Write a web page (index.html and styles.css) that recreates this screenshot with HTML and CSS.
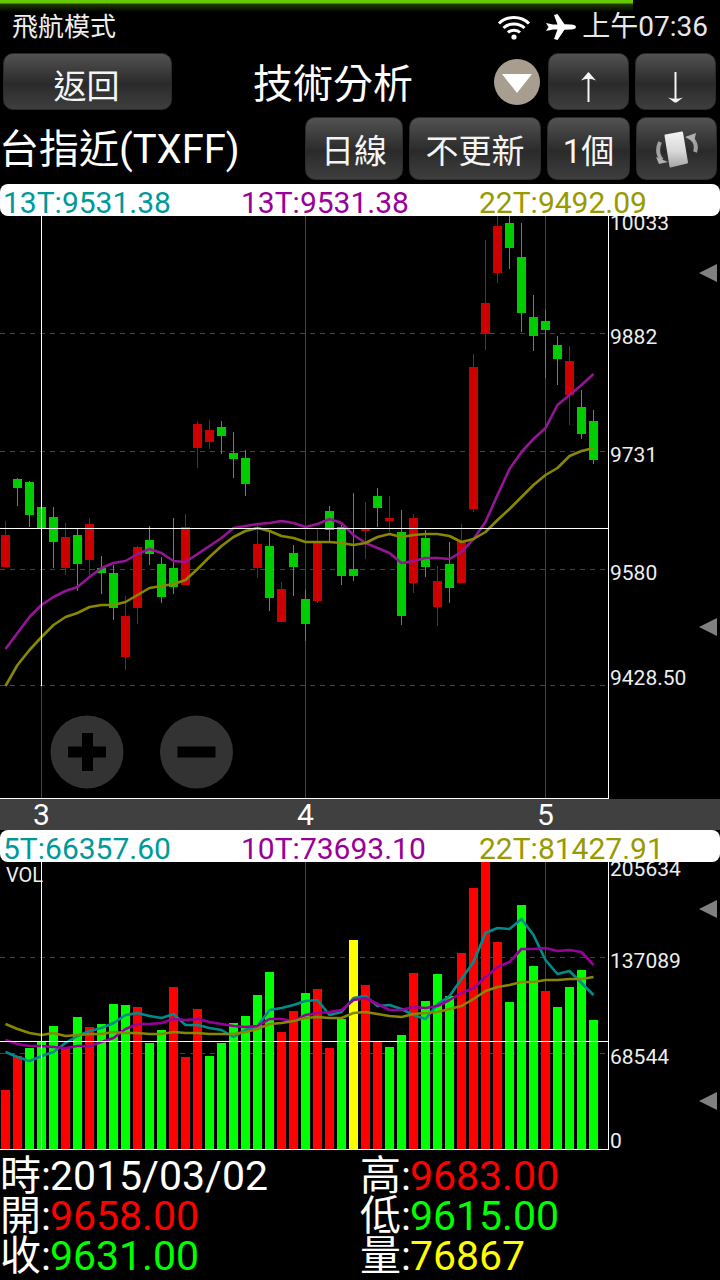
FILE: index.html
```html
<!DOCTYPE html>
<html lang="zh-Hant">
<head>
<meta charset="utf-8">
<title>技術分析</title>
<link rel="stylesheet" href="styles.css">
</head>
<body>
<div class="page">
  <div class="progress"></div>
  <header class="status">
    <span class="status-left">飛航模式</span>
    <div class="status-right">
      <svg class="wifi" width="34" height="26" viewBox="0 0 34 26"><path d="M2 9.500C10 1.500 24 1.500 32 9.500M6.500 14C12 8.500 22 8.500 27.500 14M11 18.500C14 15.500 20 15.500 23 18.500" fill="none" stroke="#fff" stroke-width="3"/><circle cx="17" cy="23" r="2.600" fill="#fff"/></svg>
      <svg class="plane" width="30" height="26" viewBox="0 0 30 26"><path d="M0 9l2.500 4L0 17l7-1.600 4.500 0L8 25l3.500 1 7-10.200 6.500-.3C28 15.300 30 14.500 30 13s-2-2.300-5-2.500l-6.500-.3L11.500 0 8 1l3.500 9.600H7z" fill="#fff"/></svg>
      <span class="clock">上午07:36</span>
    </div>
  </header>

  <div class="toolbar">
    <button class="btn btn-back">返回</button>
    <h1 class="title">技術分析</h1>
    <div class="drop"><i class="drop-arrow"></i></div>
    <button class="btn btn-arrow btn-up" aria-label="上">
      <svg width="79" height="55" viewBox="1 1 79 55"><path d="M40.500 20V49" stroke="#f4f4f4" stroke-width="2" fill="none"/><path d="M33 27.500L40.500 19 48 27.500Q40.500 24 33 27.500z" fill="#f4f4f4"/></svg>
    </button>
    <button class="btn btn-arrow btn-down" aria-label="下">
      <svg width="79" height="55" viewBox="1 1 79 55"><path d="M40.500 19V48" stroke="#f4f4f4" stroke-width="2" fill="none"/><path d="M33 44.500Q40.500 47 48 44.500L41.500 49.500H39.500z" fill="#f4f4f4"/></svg>
    </button>
  </div>

  <div class="toolbar second">
    <div class="stock">台指近(TXFF)</div>
    <button class="btn btn-day">日線</button>
    <button class="btn btn-refresh">不更新</button>
    <button class="btn btn-one">1個</button>
    <button class="btn btn-rotate" aria-label="旋轉">
      <svg width="46" height="42" viewBox="0 0 46 42">
        <defs>
          <linearGradient id="ph" x1="0" y1="0" x2="0" y2="1"><stop offset="0" stop-color="#f2f2f2"/><stop offset=".55" stop-color="#d8d8d8"/><stop offset="1" stop-color="#a8a8a8"/></linearGradient>
        </defs>
        <path d="M6 14C3 21 3.500 27 8 32" fill="none" stroke="#a0a0a0" stroke-width="4"/>
        <path d="M2 29l12 5-9 2z" fill="#b0b0b0"/>
        <path d="M41 24C43 18 42 14 37 10" fill="none" stroke="#a0a0a0" stroke-width="4"/>
        <path d="M31 9l11-4-2 9z" fill="#b0b0b0"/>
        <path d="M11.500 7.500L28 4.500 33 34.500 16.500 38.500z" fill="url(#ph)" stroke="url(#ph)" stroke-width="2" stroke-linejoin="round"/>
      </svg>
    </button>
  </div>

  <div class="legend">
    <span class="c-teal">13T:9531.38</span>
    <span class="c-purple">13T:9531.38</span>
    <span class="c-olive">22T:9492.09</span>
  </div>

  <svg class="chart chart-price" width="720" height="583" viewBox="0 216 720 583">
    <path class="grid" d="M41.500 216V798M305.500 216V798M545.500 216V798"/>
    <path class="dash" d="M0 333.500H608M0 451.500H608M0 569.500H608M0 685.500H608"/>
    <path class="wick-red" d="M5.500 521V567M65.500 523V575M89.500 518V575M125.500 596V670M137.500 546V624M185.500 514V585M197.500 421V468M209.500 420V449M257.500 525V578M281.500 582V622M317.500 529V603M365.500 502V559M389.500 496V532M413.500 514V593M437.500 566V626M461.500 524V583M473.500 354V512M485.500 240V350M497.500 216V283M569.500 346V425"/>
    <path class="body-red" d="M1 535h9v32h-9zM61 537h9v31h-9zM85 524h9v36h-9zM121 616h9v41h-9zM133 547h9v61h-9zM181 527h9v58h-9zM193 424h9v24h-9zM205 430h9v12h-9zM253 544h9v24h-9zM277 589h9v33h-9zM313 541h9v60h-9zM361 529h9v2h-9zM385 518h9v3h-9zM409 518h9v65h-9zM433 581h9v26h-9zM457 541h9v42h-9zM469 367h9v142h-9zM481 303h9v31h-9zM493 226h9v47h-9zM565 361h9v34h-9z"/>
    <path class="wick-green" d="M17.500 478V506M29.500 481V527M53.500 507V568M77.500 529V591M101.500 556V594M113.500 565V620M149.500 526V565M161.500 557V603M173.500 518V594M221.500 421V454M233.500 432V478M245.500 450V496M269.500 532V611M293.500 545V596M305.500 590V641M329.500 506V542M341.500 525V585M353.500 493V581M377.500 488V527M401.500 510V625M425.500 530V577M449.500 542V603M509.500 216V269M521.500 223V332M533.500 295V351M545.500 310V378M557.500 336V385M581.500 390V439M593.500 410V464"/>
    <path class="body-green" d="M13 479h9v9h-9zM25 482h9v33h-9zM37 507h9v21h-9zM49 517h9v25h-9zM73 535h9v29h-9zM97 568h9v5h-9zM109 573h9v35h-9zM145 540h9v14h-9zM157 564h9v33h-9zM169 568h9v19h-9zM217 427h9v9h-9zM229 453h9v6h-9zM241 458h9v26h-9zM265 546h9v52h-9zM289 553h9v14h-9zM301 599h9v25h-9zM325 511h9v19h-9zM337 527h9v49h-9zM349 569h9v7h-9zM373 496h9v12h-9zM397 532h9v84h-9zM421 538h9v29h-9zM445 564h9v24h-9zM505 223h9v25h-9zM517 257h9v56h-9zM529 317h9v19h-9zM541 321h9v9h-9zM553 345h9v14h-9zM577 407h9v27h-9zM589 421h9v39h-9z"/>
    <polyline class="ma ma-purple" points="5.500,649 17.500,633 29.500,617 41.500,605 53.500,597 65.500,591 77.500,587 89.500,577 101.500,568 113.500,563 125.500,561 137.500,554 149.500,549 161.500,553 173.500,561 185.500,562 197.500,554 209.500,546 221.500,538 233.500,528 245.500,526 257.500,524 269.500,523 281.500,521 293.500,523 305.500,527 317.500,524 329.500,519 341.500,523 353.500,535 365.500,543 377.500,548 389.500,553 401.500,563 413.500,561 425.500,558 437.500,558 449.500,559 461.500,552 473.500,539 485.500,522 497.500,495 509.500,469 521.500,452 533.500,439 545.500,428 557.500,405 569.500,395 581.500,385 593.500,374"/>
    <polyline class="ma ma-olive" points="5.500,686 17.500,665 29.500,650 41.500,637 53.500,625 65.500,617 77.500,613 89.500,607 101.500,605 113.500,605 125.500,602 137.500,595 149.500,588 161.500,586 173.500,584 185.500,580 197.500,569 209.500,557 221.500,546 233.500,537 245.500,531 257.500,528 269.500,531 281.500,536 293.500,538 305.500,542 317.500,542 329.500,542 341.500,543 353.500,545 365.500,543 377.500,537 389.500,534 401.500,537 413.500,535 425.500,534 437.500,534 449.500,536 461.500,542 473.500,539 485.500,532 497.500,520 509.500,509 521.500,497 533.500,485 545.500,475 557.500,468 569.500,456 581.500,451 593.500,448"/>
    <path class="cross" d="M41.500 216V686M0 528.500H608"/>
    <path class="frame" d="M608.500 216V799M0 798.500H608"/>
    <g class="zoom-ctl">
      <circle class="zoom-disc" cx="87" cy="752" r="36.500"/>
      <path class="zoom-mark" d="M68 752H106M87.500 733V771"/>
      <circle class="zoom-disc" cx="196.500" cy="752" r="36.500"/>
      <path class="zoom-mark" d="M177.500 752H215.500"/>
    </g>
    <text class="axis" x="610" y="230">10033</text>
    <text class="axis" x="610" y="344">9882</text>
    <text class="axis" x="610" y="462">9731</text>
    <text class="axis" x="610" y="580">9580</text>
    <text class="axis" x="610" y="685">9428.50</text>
    <path class="tri" d="M717 264V282L699 273zM717 618V636L699 627z"/>
  </svg>

  <svg class="ticks" width="720" height="31" viewBox="0 799 720 31">
    <text class="tick" x="41.500" y="825">3</text>
    <text class="tick" x="305.500" y="825">4</text>
    <text class="tick" x="545.500" y="825">5</text>
  </svg>

  <div class="legend">
    <span class="c-teal">5T:66357.60</span>
    <span class="c-purple">10T:73693.10</span>
    <span class="c-olive">22T:81427.91</span>
  </div>

  <svg class="chart chart-vol" width="720" height="288" viewBox="0 862 720 288">
    <path class="grid" d="M305.500 862V1149M545.500 862V1149"/>
    <path class="dash" d="M0 957.500H608M0 1053.500H608"/>
    <path class="bar-red" d="M1 1090h9v59h-9zM13 1056h9v93h-9zM61 1048h9v101h-9zM85 1027h9v122h-9zM133 1007h9v142h-9zM169 987h9v162h-9zM181 1057h9v92h-9zM193 1009h9v140h-9zM277 1032h9v117h-9zM289 1011h9v138h-9zM313 989h9v160h-9zM325 1048h9v101h-9zM361 985h9v164h-9zM373 1041h9v108h-9zM409 973h9v176h-9zM457 953h9v196h-9zM469 888h9v261h-9zM481 862h9v287h-9zM493 942h9v207h-9zM541 991h9v158h-9z"/>
    <path class="bar-green" d="M25 1048h9v101h-9zM37 1042h9v107h-9zM49 1026h9v123h-9zM73 1017h9v132h-9zM97 1024h9v125h-9zM109 1004h9v145h-9zM121 1005h9v144h-9zM145 1043h9v106h-9zM157 1030h9v119h-9zM205 1056h9v93h-9zM217 1043h9v106h-9zM229 1023h9v126h-9zM241 1016h9v133h-9zM253 995h9v154h-9zM265 972h9v177h-9zM301 993h9v156h-9zM337 1019h9v130h-9zM385 1047h9v102h-9zM397 1035h9v114h-9zM421 1001h9v148h-9zM433 974h9v175h-9zM445 996h9v153h-9zM505 1002h9v147h-9zM517 905h9v244h-9zM529 966h9v183h-9zM553 1007h9v142h-9zM565 987h9v162h-9zM577 970h9v179h-9zM589 1020h9v129h-9z"/>
    <path class="bar-yellow" d="M349 940h9v209h-9z"/>
    <polyline class="ma ma-teal" points="5.500,1052 17.500,1057 29.500,1061 41.500,1056 53.500,1052 65.500,1043 77.500,1036 89.500,1031 101.500,1028 113.500,1023 125.500,1015 137.500,1013 149.500,1016 161.500,1018 173.500,1014 185.500,1025 197.500,1025 209.500,1028 221.500,1030 233.500,1037 245.500,1030 257.500,1026 269.500,1010 281.500,1008 293.500,1005 305.500,1001 317.500,1000 329.500,1015 341.500,1012 353.500,998 365.500,996 377.500,1006 389.500,1005 401.500,1009 413.500,1015 425.500,1019 437.500,1004 449.500,996 461.500,979 473.500,962 485.500,933 497.500,928 509.500,929 521.500,919 533.500,935 545.500,960 557.500,974 569.500,971 581.500,983 593.500,995"/>
    <polyline class="ma ma-purple2" points="5.500,1040 17.500,1044 29.500,1046 41.500,1046 53.500,1047 65.500,1048 77.500,1046 89.500,1046 101.500,1042 113.500,1038 125.500,1029 137.500,1024 149.500,1024 161.500,1023 173.500,1019 185.500,1020 197.500,1019 209.500,1022 221.500,1024 233.500,1026 245.500,1027 257.500,1026 269.500,1019 281.500,1019 293.500,1021 305.500,1015 317.500,1013 329.500,1012 341.500,1010 353.500,1000 365.500,998 377.500,1004 389.500,1010 401.500,1010 413.500,1007 425.500,1008 437.500,1006 449.500,1000 461.500,993 473.500,988 485.500,977 497.500,967 509.500,962 521.500,949 533.500,949 545.500,948 557.500,951 569.500,950 581.500,952 593.500,965"/>
    <polyline class="ma ma-olive" points="5.500,1024 17.500,1029 29.500,1033 41.500,1035 53.500,1033 65.500,1036 77.500,1035 89.500,1034 101.500,1034 113.500,1032 125.500,1033 137.500,1033 149.500,1034 161.500,1034 173.500,1032 185.500,1033 197.500,1033 209.500,1034 221.500,1034 233.500,1034 245.500,1032 257.500,1029 269.500,1024 281.500,1023 293.500,1021 305.500,1018 317.500,1017 329.500,1018 341.500,1018 353.500,1013 365.500,1012 377.500,1014 389.500,1016 401.500,1017 413.500,1014 425.500,1013 437.500,1012 449.500,1009 461.500,1006 473.500,999 485.500,991 497.500,987 509.500,985 521.500,982 533.500,982 545.500,980 557.500,980 569.500,979 581.500,979 593.500,977"/>
    <path class="cross" d="M41.500 862V1149M0 1041.500H608"/>
    <path class="frame" d="M608.500 862V1150M0 1149.500H608"/>
    <text class="vol" x="6" y="882">VOL</text>
    <text class="axis" x="610" y="876">205634</text>
    <text class="axis" x="610" y="968">137089</text>
    <text class="axis" x="610" y="1064">68544</text>
    <text class="axis" x="610" y="1148">0</text>
    <path class="tri" d="M717 900V918L699 909zM717 1092V1110L699 1101z"/>
  </svg>

  <dl class="info">
    <div class="info-row"><dt>時:</dt><dd class="v-white">2015/03/02</dd></div>
    <div class="info-row"><dt>高:</dt><dd class="v-red">9683.00</dd></div>
    <div class="info-row"><dt>開:</dt><dd class="v-red">9658.00</dd></div>
    <div class="info-row"><dt>低:</dt><dd class="v-green">9615.00</dd></div>
    <div class="info-row"><dt>收:</dt><dd class="v-green">9631.00</dd></div>
    <div class="info-row"><dt>量:</dt><dd class="v-yellow">76867</dd></div>
  </dl>
</div>
</body>
</html>
```
FILE: styles.css
```css
* { box-sizing: border-box; }
html, body { margin: 0; padding: 0; background: #000; }
body {
  font-family: Roboto, "Noto Sans CJK TC", sans-serif;
  color: #fff;
}
.page {
  position: relative;
  width: 720px;
  height: 1280px;
  overflow: hidden;
  background: #000;
  display: flex;
  flex-direction: column;
}
.progress {
  position: absolute;
  left: 0;
  top: 0;
  width: 633px;
  height: 12px;
  background: linear-gradient(#66c800 0, #66c800 3px, #1f3c00 4px, #000 12px);
}
.status {
  height: 53px;
  flex: none;
  display: flex;
  align-items: center;
  justify-content: space-between;
  padding: 0 12px 0 12px;
}
.status-left { font-size: 26px; color: #eee; line-height: 50px; }
.status-right { display: flex; align-items: center; }
.wifi { margin-right: 15px; }
.plane { margin-right: 6px; }
.clock { font-size: 28px; color: #e8e8e8; line-height: 50px; }

.toolbar {
  display: flex;
  align-items: center;
  height: 57px;
  flex: none;
  padding: 0 4px 0 3px;
}
.toolbar.second {
  height: 63px;
  margin-top: 7px;
  padding: 0 3px 0 0;
}
.btn {
  height: 100%;
  border: 1px solid #2a2a2a;
  border-radius: 10px;
  background: linear-gradient(#525252 0, #3c3c3c 30%, #2a2a2a 55%, #343434 75%, #3e3e3e 100%);
  color: #f4f4f4;
  font-family: Roboto, "Noto Sans CJK TC", sans-serif;
  font-size: 33px;
  padding: 0;
  display: flex;
  align-items: center;
  justify-content: center;
}
.btn-back { width: 169px; padding: 4px 2px 0 0; }
.title {
  flex: 1;
  margin: 0;
  padding-top: 5px;
  font-size: 40px;
  font-weight: 400;
  text-align: center;
  line-height: 57px;
}
.drop {
  width: 46px;
  height: 46px;
  margin-right: 8px;
  border-radius: 50%;
  background: radial-gradient(circle, #a79e8f 0, #a79e8f 88%, #8d8578 100%);
  display: flex;
  align-items: center;
  justify-content: center;
}
.drop-arrow {
  width: 0;
  height: 0;
  border-left: 15px solid transparent;
  border-right: 15px solid transparent;
  border-top: 19px solid #fff;
  margin-top: 3px;
}
.btn-arrow { width: 81px; }
.btn-up { margin-right: 6px; }
.stock {
  flex: 1;
  margin-left: -1px;
  padding-top: 3px;
  font-size: 40px;
  line-height: 60px;
}
.btn-day { width: 98px; margin-right: 6px; }
.btn-refresh { width: 132px; margin-right: 6px; }
.btn-one { width: 83px; margin-right: 6px; }
.btn-rotate { width: 81px; }

.legend {
  flex: none;
  height: 32px;
  background: #fff;
  border-radius: 8px;
  display: grid;
  grid-template-columns: 238px 238px 1fr;
  padding-left: 3px;
  font-size: 30px;
  line-height: 38px;
}
.toolbar.second + .legend { margin-top: 4px; }
.c-teal { color: #009999; }
.c-purple { color: #990099; }
.c-olive { color: #999900; }

.chart { display: block; flex: none; }
.ticks { display: block; flex: none; background: #404040; }
.tick { fill: #fff; font-size: 30px; text-anchor: middle; }
.grid { stroke: #444; stroke-width: 1; fill: none; }
.dash { stroke: #444; stroke-width: 1; stroke-dasharray: 5 5; fill: none; }
.cross, .frame { stroke: #fff; stroke-width: 1; fill: none; }
.wick-red { stroke: #cc0000; stroke-width: 1; fill: none; }
.wick-green { stroke: #00cc00; stroke-width: 1; fill: none; }
.body-red { fill: #cc0000; }
.body-green { fill: #00cc00; }
.bar-red { fill: #ff0000; }
.bar-green { fill: #00ff00; }
.bar-yellow { fill: #ffff00; }
.ma { fill: none; stroke-width: 2.600; stroke-linejoin: round; }
.ma-purple { stroke: #961496; }
.ma-purple2 { stroke: #990099; }
.ma-olive { stroke: #888800; }
.ma-teal { stroke: #008c8c; }
.axis { fill: #eee; font-size: 21px; }
.vol { fill: #eee; font-size: 20px; }
.tri { fill: #808080; }
.zoom-ctl { filter: blur(0.7px); }
.zoom-disc { fill: #333; }
.zoom-mark { stroke: #000; stroke-width: 11; fill: none; }

.info {
  flex: 1;
  margin: 0;
  padding-top: 6px;
  display: grid;
  grid-template-columns: 360px 1fr;
  grid-auto-rows: 40px;
  font-size: 41px;
  line-height: 40px;
}
.info-row { display: flex; white-space: nowrap; }
.info-row dt { margin: 0 -1px 0 0; }
.info-row dd { margin: 0; }
.v-white { color: #fff; }
.v-red { color: #ff0000; }
.v-green { color: #00ff00; }
.v-yellow { color: #ffff00; }
```
